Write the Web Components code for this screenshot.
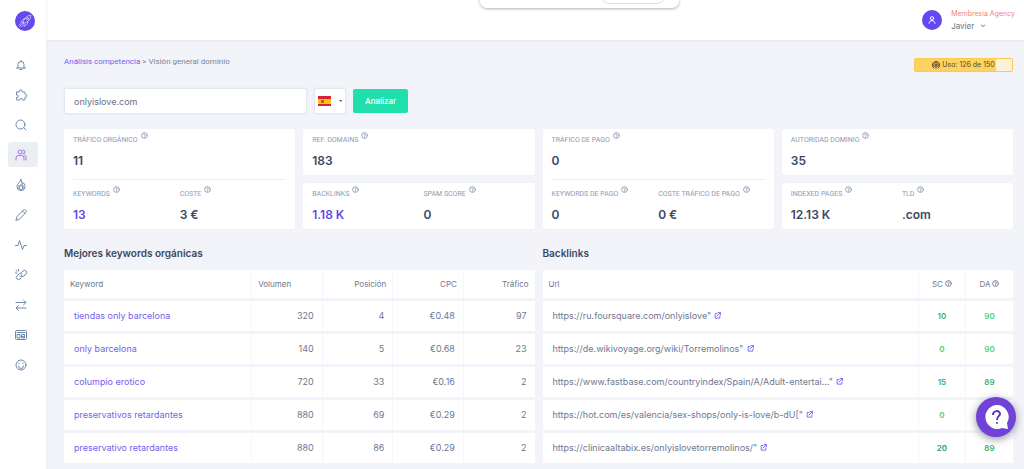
<!DOCTYPE html>
<html lang="es">
<head>
<meta charset="utf-8">
<meta name="viewport" content="width=device-width, initial-scale=1">
<title>Visión general dominio</title>
<style>
  html, body { margin: 0; min-height: 100%; }
  body {
    background: #f3f4f9;
    font-family: Inter, "Liberation Sans", sans-serif;
    font-size: 8px;
    line-height: 12px;
    color: #6e7891;
    --ink: #3b4863;
    --muted: #8b9ab3;
    --brand: #6449ee;
    --link: #7460ee;
  }
</style>
</head>
<body>
<app-shell>
  <side-nav slot="side"></side-nav>
  <top-bar slot="top"></top-bar>
  <page-head></page-head>
  <domain-search></domain-search>
  <stat-board>
    <stat-card>
      <stat-item label="TRÁFICO ORGÁNICO">11</stat-item>
      <stat-item slot="more" label="KEYWORDS" accent>13</stat-item>
      <stat-item slot="more" label="COSTE">3 €</stat-item>
    </stat-card>
    <stat-stack>
      <stat-card compact><stat-item label="REF. DOMAINS">183</stat-item></stat-card>
      <stat-card compact>
        <stat-item label="BACKLINKS" accent>1.18 K</stat-item>
        <stat-item label="SPAM SCORE">0</stat-item>
      </stat-card>
    </stat-stack>
    <stat-card>
      <stat-item label="TRÁFICO DE PAGO">0</stat-item>
      <stat-item slot="more" label="KEYWORDS DE PAGO">0</stat-item>
      <stat-item slot="more" label="COSTE TRÁFICO DE PAGO">0 €</stat-item>
    </stat-card>
    <stat-stack>
      <stat-card compact><stat-item label="AUTORIDAD DOMINIO">35</stat-item></stat-card>
      <stat-card compact>
        <stat-item label="INDEXED PAGES">12.13 K</stat-item>
        <stat-item label="TLD">.com</stat-item>
      </stat-card>
    </stat-stack>
  </stat-board>
  <table-pair>
    <data-section><span slot="title">Mejores keywords orgánicas</span><keyword-table></keyword-table></data-section>
    <data-section><span slot="title">Backlinks</span><backlink-table></backlink-table></data-section>
  </table-pair>
</app-shell>
<help-button></help-button>

<script>
const ICONS = {
  bell: '<path d="M3 18h18M6 18v-7a6 6 0 0 1 12 0v7M10 21h4M12 5V3"/>',
  puzzle: '<path d="M4 6h4a1 1 0 0 0 1-1V4a2.500 2.500 0 0 1 5 0v1a1 1 0 0 0 1 1h4a1 1 0 0 1 1 1v4h1a2.500 2.500 0 0 1 0 5h-1v5a1 1 0 0 1-1 1h-4v-1a2.500 2.500 0 0 0-5 0v1H4a1 1 0 0 1-1-1v-4h1a2.500 2.500 0 0 0 0-5H3V7a1 1 0 0 1 1-1z"/>',
  search: '<circle cx="11" cy="11" r="9"/><path d="m18 18 4 4"/>',
  users: '<circle cx="10" cy="6" r="4"/><path d="M2 22v-4a5 5 0 0 1 5-5h6a5 5 0 0 1 5 5v4M16 2a4 4 0 0 1 0 8M19 12a5 5 0 0 1 3 5v5"/>',
  fire: '<path d="M12 1c0 5-8 7-8 14a8 8 0 0 0 16 0c0-4-2-6-4-8l-1 4c-2-3-1-6-3-10z"/><path d="M12 22c-3-1-4-3-3-6l3-5 3 5c1 3 0 5-3 6zM8 13v6M16 13v6"/>',
  pencil: '<path d="M2 22l2-7L17 2c1-1 3-1 4 0l1 1c1 1 1 3 0 4L9 20zM15 4l5 5"/>',
  pulse: '<path d="M1 13h5L9 3l6 18 3-8h5"/>',
  link: '<path d="M12 18l-2 2a4 4 0 0 1-6-6l4-4a4 4 0 0 1 6 0M12 12a4 4 0 0 0 6 2l4-4a4 4 0 0 0-6-6l-3 3M10 15a4 4 0 0 0 5 0M2 3l2 1M7 1v3M1 8h3"/>',
  swap: '<path d="M2 7h19M17 2l5 5-5 5M22 18H3M7 13l-5 5 5 5"/>',
  news: '<rect x="1" y="3" width="22" height="18" rx="2"/><path d="M4 7h16M5 11h5v7H5zM14 11h5v7h-5zM14 15h5"/>',
  smile: '<circle cx="12" cy="12" r="10"/><path d="M7 14a5 5 0 0 0 10 0M8 8v1M16 8v1"/>',
  help: '<circle cx="12" cy="12" r="10"/><path d="M9 9c1-3 6-2 6 1 0 2-3 2-3 4M12 17v1"/>',
  external: '<path d="M10 5H4v16h16v-7M14 2h8v8M22 2 10 14"/>',
  user: '<circle cx="12" cy="7" r="5"/><path d="M3 22c1-6 5-8 9-8s8 2 9 8"/>',
  down: '<path d="m5 8 7 7 7-7"/>',
  gauge: '<path d="M5 21a11 11 0 1 1 14 0M7 17a7 7 0 1 1 10 0M12 12v10"/><circle cx="12" cy="12" r="2"/>',
  rocket: '<path d="M9 15c0-6 5-12 13-13 0 8-6 13-13 14zM9 15l-4-1 4-5 3-1M10 17l1 4 5-4 1-4M7 17l-5 5M5 16l-3 3M9 19l-3 3"/><circle cx="16" cy="8" r="2"/>'
};

function define(name, markup, setup) {
  const template = document.createElement('template');
  template.innerHTML = markup;
  customElements.define(name, class extends HTMLElement {
    constructor() {
      super();
      this.attachShadow({ mode: 'open' }).append(template.content.cloneNode(true));
    }
    connectedCallback() { if (setup) setup(this, this.shadowRoot); }
  });
}

define('ui-icon', `<style>
  :host { display: inline-block; flex: none; width: 12px; height: 12px; }
  svg { display: block; width: 100%; height: 100%; fill: none; stroke: currentColor;
        stroke-linecap: round; stroke-linejoin: round; overflow: visible; }
</style><svg viewBox="0 0 24 24" aria-hidden="true"></svg>`, (el, root) => {
  const svg = root.querySelector('svg');
  svg.setAttribute('stroke-width', el.getAttribute('weight') || '2');
  svg.innerHTML = ICONS[el.getAttribute('name')];
});

define('app-shell', `<style>
  :host { display: grid; grid-template-columns: 46px minmax(0, 1fr); min-height: 100vh; }
  .column { display: flex; flex-direction: column; min-width: 0; }
  main { padding: 16px 11px 3px 18px; }
</style>
<slot name="side"></slot>
<div class="column"><slot name="top"></slot><main><slot></slot></main></div>`);

define('side-nav', `<style>
  :host { display: block; background: #fff; box-shadow: 0 0 3px #dfe3ec; z-index: 1; }
  .logo { display: grid; place-items: center; width: 20px; height: 20px; margin: 11px 0 0 15px;
          border-radius: 50%; background: #6448f0; color: #fff; }
  .logo ui-icon { width: 14px; height: 14px; }
  nav { display: flex; flex-direction: column; gap: 5px; margin: 21px 8px 0 8px; }
  nav a { display: flex; align-items: center; height: 25px; padding-left: 7px; border-radius: 3px; color: #7089ab; }
  nav a.active { background: #ebeef3; color: #a672f2; }
</style>
<a class="logo" href="#" aria-label="Inicio"><ui-icon name="rocket" weight="1"></ui-icon></a>
<nav></nav>`, (el, root) => {
  const items = [['bell', 'Avisos'], ['puzzle', 'Extensiones'], ['search', 'Buscar'], ['users', 'Competencia'],
    ['fire', 'Tendencias'], ['pencil', 'Redactar'], ['pulse', 'Actividad'], ['link', 'Enlaces'],
    ['swap', 'Comparar'], ['news', 'Noticias'], ['smile', 'Ayuda']];
  root.querySelector('nav').innerHTML = items.map(([icon, label]) =>
    `<a href="#" aria-label="${label}"${icon === 'users' ? ' class="active"' : ''}><ui-icon name="${icon}"></ui-icon></a>`).join('');
});

define('top-bar', `<style>
  :host { display: flex; justify-content: flex-end; align-items: center; height: 40px; position: relative;
          background: #fff; box-shadow: 0 1px 2px #e3e7ee; box-sizing: border-box; padding-right: 9px; }
  .float { position: absolute; top: -12px; left: 434px; width: 199px; height: 20px; border-radius: 7px;
           background: #fff; box-shadow: 0 1px 3px #aeb5b8; }
  .float i { position: absolute; left: 121px; bottom: 4px; width: 62px; height: 14px;
             border: 1px solid #cfdffc; border-radius: 8px; }
  .user { display: flex; align-items: center; gap: 9px; }
  .avatar { display: grid; place-items: center; width: 20px; height: 20px; border-radius: 50%;
            background: #6448f0; color: #fff; }
  .avatar ui-icon { width: 8px; height: 8px; }
  .plan { color: #f8817d; font-size: 7px; }
  button { display: flex; align-items: center; gap: 6px; padding: 0; border: 0; background: none;
           font: inherit; color: #69758f; }
  button ui-icon { width: 6px; height: 6px; }
</style>
<div class="float"><i></i></div>
<div class="user">
  <span class="avatar"><ui-icon name="user" weight="3"></ui-icon></span>
  <div><div class="plan">Membresía Agency</div>
  <button type="button">Javier <ui-icon name="down" weight="4"></ui-icon></button></div>
</div>`);

define('page-head', `<style>
  :host { display: flex; justify-content: space-between; align-items: flex-start; }
  nav { font-family: Roboto, sans-serif; font-size: 8px; color: #7c8494; }
  a { color: var(--link); text-decoration: none; }
  .usage { display: flex; align-items: center; justify-content: center; gap: 2px; box-sizing: border-box;
           width: 99px; height: 14px; margin-top: 2px; border: 1px solid #fbcb50; border-radius: 2px;
           font-size: 7px; color: #574b2c; background: linear-gradient(90deg, #fdd260 83%, #fcf2d9 83%); }
  .usage ui-icon { width: 8px; height: 8px; }
</style>
<nav aria-label="Ruta"><a href="#">Análisis competencia</a> &gt; Visión general dominio</nav>
<div class="usage"><ui-icon name="gauge" weight="3"></ui-icon>Uso: 126 de 150</div>`);

define('domain-search', `<style>
  :host { display: block; margin-top: 16px; }
  form { display: flex; align-items: center; gap: 7px; }
  input, select, button { box-sizing: border-box; margin: 0; font: inherit; border-radius: 2px; }
  input { width: 243px; height: 26px; padding: 0 9px; border: 1px solid #e3e7ef; background: #fff;
          font-size: 9px; color: #68728a; box-shadow: 0 0 2px #dde1eb; }
  .country { position: relative; display: flex; }
  select { appearance: none; width: 32px; height: 26px; border: 1px solid #e3e7ef; background: #fff;
           box-shadow: 0 0 2px #dde1eb; }
  .country svg { position: absolute; left: 3px; top: 8px; width: 26px; height: 10px; pointer-events: none; }
  button { height: 24px; padding: 0 12px; border: 0; background: #1fdfac; color: #fff; font-size: 8px; font-weight: 500; }
</style>
<form>
  <input type="text" aria-label="Dominio" value="onlyislove.com">
  <div class="country">
    <select aria-label="País"><option value="es" aria-label="España"></option></select>
    <svg viewBox="0 0 26 10" aria-hidden="true"><path fill="#d9232e" d="M1 0h13v10H1z"/><path fill="#fdc415" d="M1 3h13v5H1z"/><path fill="#b5602b" d="M4 4h3v3H4z"/><path fill="#4c5568" d="M22 4h3l-1 2z"/></svg>
  </div>
  <button type="button">Analizar</button>
</form>`);

define('stat-board', `<style>
  :host { display: grid; grid-template-columns: repeat(4, minmax(0, 1fr)); gap: 8px; margin-top: 15px; }
</style><slot></slot>`);

define('stat-stack', `<style>
  :host { display: grid; grid-template-rows: 1fr 1fr; gap: 8px; }
</style><slot></slot>`);

define('stat-card', `<style>
  :host { display: block; padding: 3px 9px 6px; border-radius: 3px; background: #fff; box-shadow: 0 0 2px #eceff5; }
  :host([compact]) { padding-right: 0; }
  .row { display: grid; grid-template-columns: 1fr 1fr; }
  .more { margin-top: 10px; border-top: 1px solid #eef0f4; padding-top: 6px; }
</style>
<div class="row"><slot></slot></div>
<div class="row more"><slot name="more"></slot></div>`, (el, root) => {
  if (!el.querySelector('[slot=more]')) root.querySelector('.more').remove();
});

define('stat-item', `<style>
  :host { display: block; color: var(--ink); font-size: 12px; line-height: 16px; font-weight: 600; }
  :host([accent]) { color: var(--brand); }
  .label { display: flex; gap: 3px; height: 16px; margin-bottom: 5px; color: var(--muted);
           font: 400 7px/16px Roboto, sans-serif; white-space: nowrap; }
  ui-icon { width: 7px; height: 7px; }
</style>
<div class="label"><span></span><ui-icon name="help" weight="3"></ui-icon></div><slot></slot>`, (el, root) => {
  root.querySelector('span').textContent = el.getAttribute('label');
});

define('table-pair', `<style>
  :host { display: grid; grid-template-columns: repeat(2, minmax(0, 1fr)); gap: 8px; margin-top: 16px; }
</style><slot></slot>`);

define('data-section', `<style>
  :host { display: block; }
  h2 { margin: 0 0 6px; font-size: 10px; line-height: 16px; font-weight: 600; color: var(--ink); }
</style><h2><slot name="title"></slot></h2><slot></slot>`);

const TABLE_STYLE = `
  :host { display: block; }
  table { width: 100%; table-layout: fixed; border-collapse: separate; border-spacing: 0 3px; }
  th, td { box-sizing: border-box; background: #fff; border-right: 1px solid #f5f6fa; white-space: nowrap; }
  th:last-child, td:last-child { border-right: 0; }
  th { height: 28px; padding: 0 6px; font-size: 8px; font-weight: 400; text-align: left; }
  td { height: 30px; padding: 0 8px 0 10px; font-size: 9px; }
  a { color: var(--link); text-decoration: none; }`;

define('keyword-table', `<style>${TABLE_STYLE}
  col { width: 15%; } col:first-child { width: 40%; }
  td { text-align: right; } td:first-child { text-align: left; }
  th:nth-child(n+3) { text-align: right; }
</style>
<table><colgroup><col><col><col><col><col></colgroup>
<thead><tr><th>Keyword</th><th>Volumen</th><th>Posición</th><th>CPC</th><th>Tráfico</th></tr></thead><tbody></tbody></table>`, (el, root) => {
  const rows = [
    ['tiendas only barcelona', '320', '4', '€0.48', '97'],
    ['only barcelona', '140', '5', '€0.68', '23'],
    ['columpio erotico', '720', '33', '€0.16', '2'],
    ['preservativos retardantes', '880', '69', '€0.29', '2'],
    ['preservativo retardantes', '880', '86', '€0.29', '2']];
  root.querySelector('tbody').innerHTML = rows.map(([word, ...rest]) =>
    `<tr><td><a href="#">${word}</a></td>${rest.map(v => `<td>${v}</td>`).join('')}</tr>`).join('');
});

define('backlink-table', `<style>${TABLE_STYLE}
  col { width: 10%; } col:first-child { width: 80%; }
  th ui-icon { width: 7px; height: 7px; margin-left: 2px; }
  td ui-icon { width: 7px; height: 7px; margin-left: 3px; }
  th:nth-child(n+2) { text-align: center; padding: 0; }
  td:nth-child(n+2) { text-align: center; padding: 0; font-size: 8px; font-weight: 600; color: #50cf80; }
  td.mid:nth-child(n+2) { color: #3fae6c; }
  td.high:nth-child(n+2) { color: #279c78; }
</style>
<table><colgroup><col><col><col></colgroup>
<thead><tr><th>Url</th><th>SC<ui-icon name="help" weight="3"></ui-icon></th><th>DA<ui-icon name="help" weight="3"></ui-icon></th></tr></thead><tbody></tbody></table>`, (el, root) => {
  const rows = [
    ['https://ru.foursquare.com/onlyislove"', 10, 'mid', 90, ''],
    ['https://de.wikivoyage.org/wiki/Torremolinos"', 0, '', 90, ''],
    ['https://www.fastbase.com/countryindex/Spain/A/Adult-entertai..."', 15, 'mid', 89, 'mid'],
    ['https://hot.com/es/valencia/sex-shops/only-is-love/b-dU["', 0, '', 89, 'mid'],
    ['https://clinicaaltabix.es/onlyislovetorremolinos/"', 20, 'high', 89, 'mid']];
  root.querySelector('tbody').innerHTML = rows.map(([url, sc, scTone, da, daTone]) =>
    `<tr><td>${url}<a href="#" aria-label="Abrir enlace"><ui-icon name="external" weight="3"></ui-icon></a></td>` +
    `<td class="${scTone}">${sc}</td><td class="${daTone}">${da}</td></tr>`).join('');
});

define('help-button', `<style>
  :host { position: fixed; right: 8px; bottom: 32px; display: block; z-index: 5; }
  button { display: block; width: 40px; height: 40px; padding: 0; border: 0; border-radius: 50%;
           background: #7042d8; box-shadow: 0 2px 8px #8d8f9c; }
  svg { display: block; width: 40px; height: 40px; }
</style>
<button type="button" aria-label="Ayuda"><svg viewBox="0 0 40 40" aria-hidden="true">
  <path fill="#fff" d="M20 8a12 12 0 1 0 6 23l6 1-1-6A12 12 0 0 0 20 8z"/>
  <path fill="none" stroke="#5b36b8" stroke-width="2" d="M17 18c0-5 7-5 7-1 0 2-3 2-3 6"/><circle cx="21" cy="26" r="1" fill="#5b36b8"/>
</svg></button>`);
</script>
</body>
</html>
